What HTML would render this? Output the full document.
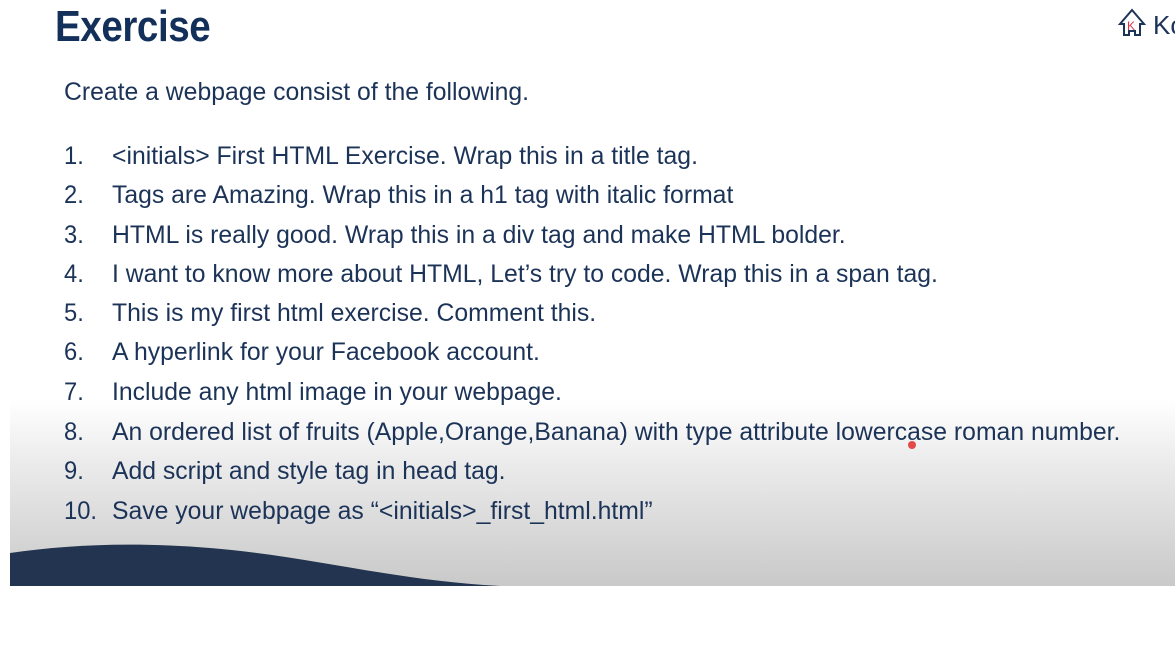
<!DOCTYPE html>
<html><head><style>
body{margin:0;width:1175px;height:648px;background:#fff;position:relative;overflow:hidden;font-family:"Liberation Sans",sans-serif;color:#1c3358}
.slide{position:absolute;left:10px;top:0;width:1165px;height:586px;background:linear-gradient(to bottom,#fff 0,#fff 400px,#ececec 460px,#c9c9c9 586px);overflow:hidden}
.t{position:absolute;white-space:nowrap;transform-origin:left top}
h1{position:absolute;left:55px;top:2px;margin:0;font-size:44px;font-weight:bold;color:#13305a;transform:scaleX(0.877);transform-origin:left top;letter-spacing:-0.5px}
.line{position:absolute;font-size:25px;white-space:nowrap;transform:scaleX(0.99);transform-origin:left top}
.n{position:absolute;left:64px;font-size:25px;transform:scaleX(0.95);transform-origin:left top}
</style></head><body>
<div class="slide">
<svg width="1165" height="586" style="position:absolute;left:0;top:0"><path d="M0 553 C60 544 130 542 200 548 C300 556 380 580 490 586 L0 586 Z" fill="#22344f"/></svg>
</div>
<h1>Exercise</h1>
<svg style="position:absolute;left:1117px;top:8px" width="32" height="30" viewBox="0 0 32 30"><path d="M15 2 L3 16 L7 16 L7 27 L12 27 L12 23 L18 23 L18 27 L23 27 L23 16 L27 16 Z" fill="none" stroke="#1c3358" stroke-width="2"/><text x="10" y="22" font-size="12" fill="#e0334a" font-family="Liberation Sans">K</text></svg>
<div class="t" style="left:1153px;top:10px;font-size:26px;color:#1c3358">Ko</div>
<div class="line" style="left:64px;top:78px">Create a webpage consist of the following.</div>
<div class="n" style="top:142px">1.</div><div class="line" style="left:112px;top:142px">&lt;initials&gt; First HTML Exercise. Wrap this in a title tag.</div>
<div class="n" style="top:181px">2.</div><div class="line" style="left:112px;top:181px">Tags are Amazing. Wrap this in a h1 tag with italic format</div>
<div class="n" style="top:221px">3.</div><div class="line" style="left:112px;top:221px">HTML is really good. Wrap this in a div tag and make HTML bolder.</div>
<div class="n" style="top:260px">4.</div><div class="line" style="left:112px;top:260px">I want to know more about HTML, Let’s try to code. Wrap this in a span tag.</div>
<div class="n" style="top:299px">5.</div><div class="line" style="left:112px;top:299px">This is my first html exercise. Comment this.</div>
<div class="n" style="top:338px">6.</div><div class="line" style="left:112px;top:338px">A hyperlink for your Facebook account.</div>
<div class="n" style="top:378px">7.</div><div class="line" style="left:112px;top:378px">Include any html image in your webpage.</div>
<div class="n" style="top:418px">8.</div><div class="line" style="left:112px;top:418px">An ordered list of fruits (Apple,Orange,Banana) with type attribute lowercase roman number.</div>
<div class="n" style="top:457px">9.</div><div class="line" style="left:112px;top:457px">Add script and style tag in head tag.</div>
<div class="n" style="top:497px">10.</div><div class="line" style="left:112px;top:497px">Save your webpage as “&lt;initials&gt;_first_html.html”</div>
<div style="position:absolute;left:908px;top:441px;width:8px;height:8px;border-radius:50%;background:#e02020;opacity:.8"></div>
</body></html>
